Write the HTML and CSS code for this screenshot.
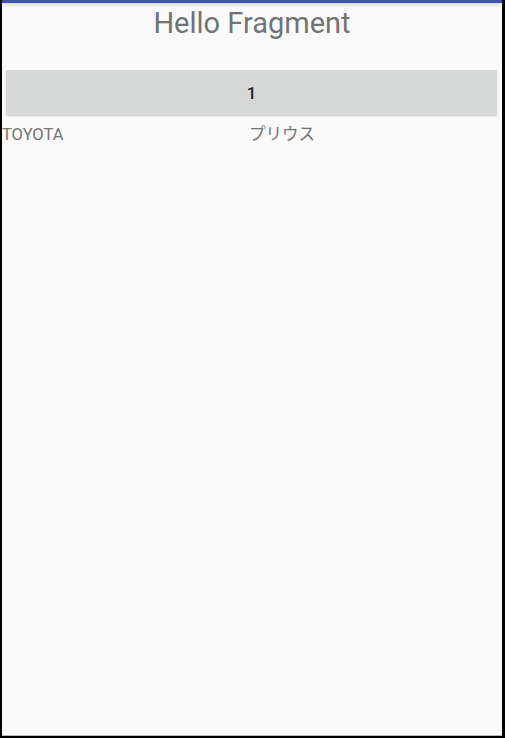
FILE: index.html
```html
<!DOCTYPE html>
<html lang="ja">
  <head>
    <meta charset="UTF-8" />
    <meta name="viewport" content="width=device-width, initial-scale=1.0" />
    <title>Hello Fragment</title>
    <link rel="stylesheet" href="styles.css">
  </head>
  <body>
    <div class="screen">
      <div class="app-bar"></div>

      <h1 class="title">Hello Fragment</h1>

      <button class="btn">1</button>

      <div class="car-row">
        <span class="maker">TOYOTA</span>
        <span class="model">プリウス</span>
      </div>
    </div>
  </body>
</html>
```

FILE: styles.css
```css
* {
  margin: 0;
  padding: 0;
  box-sizing: border-box;
}

body {
  background: #000;
  font-family: Roboto, "Noto Sans CJK JP", sans-serif;
  width: 505px;
  height: 738px;
  overflow: hidden;
}

.screen {
  position: relative;
  margin-left: 2px;
  width: 500px;
  height: 736px;
  background: #fafafa;
  border-bottom: 1px solid #b8b8b8;
}

.app-bar {
  height: 3px;
  background: #3f51b5;
  box-shadow: 0 1px 4px rgba(0, 0, 0, 0.25);
}

.title {
  padding-top: 4px;
  font-size: 29px;
  line-height: 32px;
  font-weight: 400;
  color: #737373;
  text-align: center;
}

.btn {
  display: block;
  margin: 31px 5px 0 4px;
  width: 491px;
  height: 45px;
  border: none;
  border-radius: 2px;
  background: #d6d7d7;
  box-shadow: 0 1px 2px rgba(0, 0, 0, 0.2);
  font-family: Roboto, sans-serif;
  font-size: 17px;
  font-weight: 500;
  color: #1e1e1e;
}

.car-row {
  display: grid;
  grid-template-columns: 247px 1fr;
  margin-top: 10px;
  font-size: 16.5px;
  line-height: 19px;
  color: #737373;
}
```
